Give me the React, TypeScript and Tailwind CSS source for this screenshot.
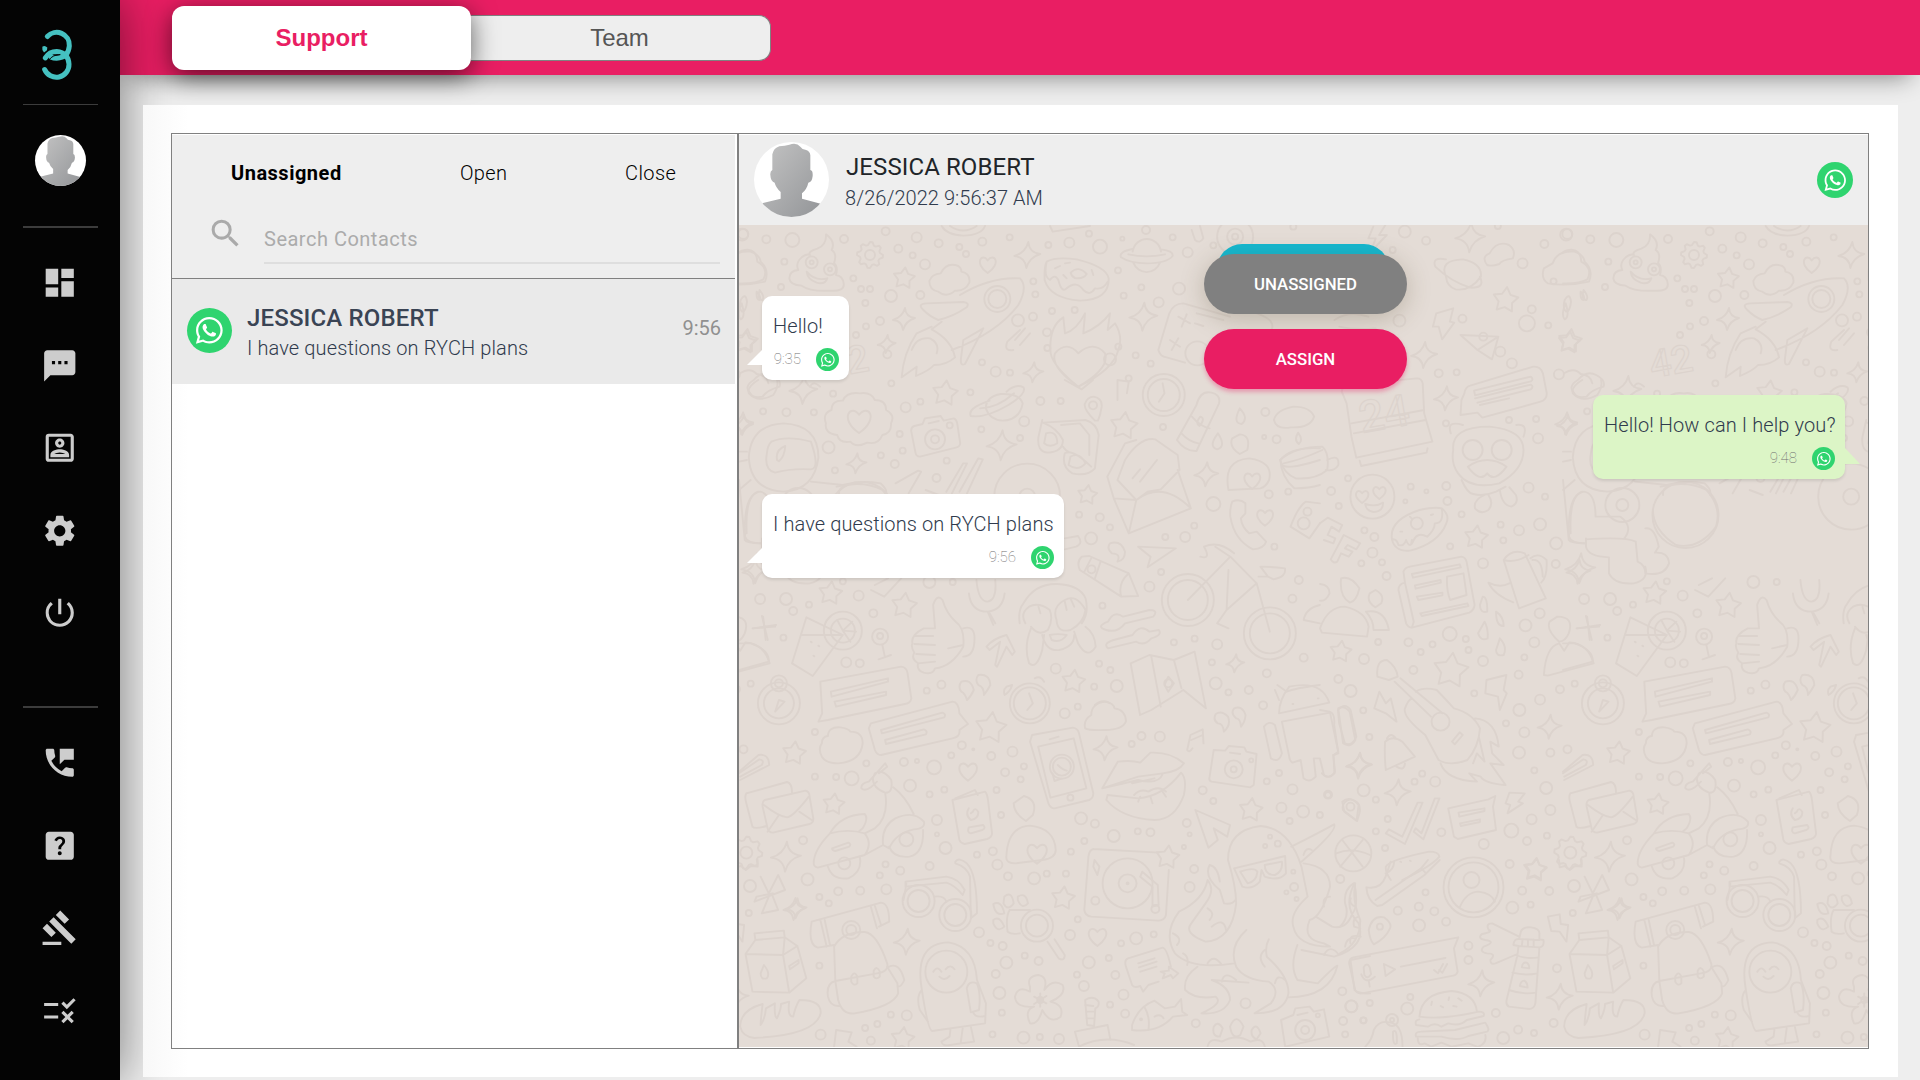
import React from "react";
import {
  MdDashboard,
  MdSms,
  MdOutlinePortrait,
  MdSettings,
  MdPowerSettingsNew,
  MdPermPhoneMsg,
  MdHelpCenter,
  MdGavel,
  MdRule,
  MdSearch,
} from "react-icons/md";
import { FaWhatsapp } from "react-icons/fa";

/* ---------- Wallpaper ---------- */

type Sheet = {
  x: number;
  y: number;
  sx: number;
  rings: number[][];
  stars?: number[][];
  sparks?: number[][];
  hearts?: number[][];
  gears?: number[][];
  art: string;
};

const SY = 1 / 3;

const sheets: Sheet[] = [
  {
    x: 730, y: 120, sx: 1 / 3,
    rings: [
      [40,342,5],[109,358,4],[187,360,7],[342,357,4],[163,425,3],[467,334,4],[560,352,5],[505,386,4],[548,406,3],[585,433,5],[626,370,4],[688,381,3],[708,402,3],[757,365,4],[839,352,3],[955,375,3],[1018,368,5],[1110,380,7],[1077,341,3],[1177,356,2],[1248,330,4],[1328,352,3],[1450,376,3],[1373,397,5],
      [370,475,3],[393,507,3],[420,507,3],[406,549,3],[483,528,6],[571,525,4],[153,501,3],[910,484,3],[916,523,3],[1181,527,3],[1164,451,3],[1234,502,3],[1286,547,5],[1347,506,6],[1034,570,3],[966,573,3],[909,590,4],[864,601,6],[951,637,4],[952,684,3],[450,603,4],[378,645,3],[408,619,3],[1165,680,3],[1140,718,6],[1217,706,3],[1262,731,3],[1196,775,3],[797,755,5],[756,727,3],[840,758,3],[472,703,4],[484,790,3],
      [420,405,5],[802,537,13],[802,537,9],[245,427,6],[300,448,6],[245,427,2],[300,448,2],[1402,700,12],
    ],
    stars: [[522,475,11],[45,668,11]],
    sparks: [[892,405,13],[522,597,11],[470,672,9],[910,757,10],[1240,590,14]],
    hearts: [[773,432,9]],
    gears: [[420,405,13]],
    art:
      "M27 490Q75 492 100 478Q118 445 82 425Q80 385 45 390Q30 392 27 398 M240 405Q232 395 262 386Q290 375 288 343Q318 365 305 390Q322 400 312 430Q325 440 318 465Q338 468 341 490Q345 515 300 512Q240 515 215 497Q180 495 178 475Q178 452 205 450Q195 430 215 412Q230 400 240 405Z M230 455Q255 485 292 475Q285 495 260 488Q232 478 230 455Z " +
      "M80 515Q95 530 88 540Q78 538 80 515Z M35 550Q20 585 32 598Q48 590 35 550Z M625 515Q598 510 598 483Q605 462 632 460Q650 425 685 438Q695 445 694 455Q722 460 718 488Q705 515 675 512Q650 535 625 515Z " +
      "M950 425Q975 410 1040 418Q1130 440 1136 475Q1138 540 1050 542Q960 535 944 480Q942 440 950 425Z M950 425Q940 470 960 480Q975 460 985 480Q995 520 1010 505Q1040 480 1060 510Q1080 530 1095 505Q1120 510 1133 485 M1022 458Q1045 435 1070 462Q1060 478 1035 474Q1025 470 1022 458Z M975 445L990 438M1005 430L1020 428M1085 450L1090 465M1000 465L1010 475 " +
      "M1208 395A43 45 0 0 1 1293 395M1210 428A43 45 0 0 0 1290 428M1208 387Q1165 395 1173 412Q1200 430 1250 430Q1310 430 1328 408Q1330 392 1293 388M1195 403Q1250 415 1305 403 " +
      "M690 525Q780 470 870 475Q895 500 865 555Q800 640 665 690M580 570Q560 552 590 550L700 546Q720 548 710 562Q670 590 625 600Q600 590 580 570M665 545M635 605L605 628Q665 660 675 712M760 625L705 732Q690 740 693 715L700 660ZM605 620L560 640Q520 700 515 772L560 740L558 768Q600 750 612 735Q650 735 675 712M545 690Q560 650 600 655Q630 670 620 700 " +
      "M962 700Q955 620 1000 592L1005 640Q1040 630 1065 580L1060 640Q1110 620 1140 580L1133 630L1155 610Q1180 650 1165 690Q1150 750 1045 800Q970 740 962 700M1045 800Q960 740 975 700Q1010 660 1045 700Q1090 660 1125 700Q1140 745 1045 800Z " +
      "M635 318Q650 345 700 347Q755 345 765 318M660 318Q700 345 740 318M960 318L968 335L1080 318M1385 330L1395 360Q1410 372 1420 355L1410 318M850 690Q820 695 832 665L870 630M855 660L885 625M870 675L900 640M1500 590L1360 550Q1330 550 1318 580L1285 690Q1290 710 1310 712L1365 728M1345 590L1380 610M1370 583L1355 620M1320 660L1350 680M1345 655L1325 690M1400 580L1480 600M1395 610L1420 618 " +
      "M30 760Q60 740 80 762Q110 765 115 790M270 800Q250 780 240 800",
  },
  {
    x: 1160, y: 220, sx: 0.4847,
    rings: [
      [205,101,4],[275,20,3],[505,35,6],[480,90,3],[549,62,4],[697,18,3],[748,130,5],[838,44,6],[793,72,4],[767,268,4],[812,184,3],[624,296,4],[757,310,8],[801,316,3],[667,350,4],[702,395,5],[726,430,5],[575,460,4],[612,457,3],[823,463,5],[780,655,5],[776,597,3],[494,302,6],[388,775,3],[155,50,18],[155,50,8],[155,50,3],[645,690,10],[705,690,10],[720,600,3],[590,610,3],
    ],
    stars: [[713,240,13],[846,363,12]],
    sparks: [[640,52,15],[545,405,13],[590,535,12],[838,610,11]],
    art:
      "M590 170Q575 120 625 118Q665 130 662 170Q640 215 610 208Q592 200 590 170ZM590 118Q560 110 568 140Q600 185 640 203Q672 205 660 170 M675 135Q662 110 680 100Q695 60 720 75Q735 90 728 115Q705 120 700 132Q685 140 675 135Z M800 190Q785 175 792 145L810 130Q820 90 855 95Q875 105 876 125Q895 150 885 185Q840 200 800 190Z " +
      "M440 20L430 55L445 55L435 95L468 45L452 45L465 15M420 90L440 110L420 140M570 280L605 265L598 305L607 308L582 358L575 320L563 320ZM620 345L698 350L685 418L655 390ZM655 390L698 350M835 240Q845 215 848 245Q846 275 838 275Q830 265 835 240ZM874 210Q885 230 880 240Q868 240 874 210Z " +
      "M622 540L628 520Q630 500 640 497L770 440Q785 438 790 460L798 520Q798 540 785 545L665 593L655 578L620 585ZM648 512L765 470Q772 478 765 484L650 526ZM650 535L765 494Q772 500 765 508L655 548M660 555L720 535 " +
      "M385 550L375 515Q375 500 390 495L530 475Q540 475 542 490L545 580L562 665L405 713L395 650ZM395 610L545 570M400 640L548 600M412 722L415 738L550 698L552 685M605 690Q600 620 680 620Q750 630 750 690Q750 750 700 790Q640 810 615 760Q600 730 605 690ZM635 740Q675 700 715 740Q690 790 675 760Q660 790 635 740M600 640Q590 600 625 615M735 615Q760 610 750 650 " +
      "M248 720Q280 680 335 680Q350 700 345 750Q320 780 280 775Q255 760 248 720ZM255 730Q290 720 335 690M345 720Q370 700 368 735Q360 755 342 750M235 600Q240 570 275 560Q310 560 318 590Q310 625 270 622Q240 630 235 600ZM855 520Q840 500 862 480Q880 450 900 465Q920 480 915 500Q890 510 880 530Q860 535 855 520Z M200 280Q240 300 230 330M360 300Q390 270 430 290M370 320Q400 330 445 325",
  },
  {
    x: 730, y: 380, sx: 0.3762,
    rings: [
      [467,82,5],[506,65,3],[274,41,3],[150,97,4],[223,97,3],[88,94,3],[639,37,3],[825,63,4],[879,63,3],[782,124,5],[668,148,3],[771,174,3],[262,202,6],[451,162,3],[459,212,3],[401,226,3],[438,252,4],[279,271,3],[576,242,3],[549,294,4],[1151,141,3],[1423,96,4],[1420,171,2],[1453,178,4],[1432,343,4],[1484,335,3],[1285,372,7],[1234,437,3],[1210,471,5],[1157,471,3],[1010,442,3],[928,404,3],[983,412,4],[960,475,6],[961,568,4],[1146,576,3],[1115,620,5],[990,677,3],[1495,656,4],[1512,600,4],[1447,500,3],[1180,787,3],[1235,776,3],[1295,793,5],[1281,847,3],[1427,880,4],[1525,833,4],[1291,910,6],[1325,937,3],[1379,930,4],[866,866,5],[981,851,3],[1011,870,3],[968,920,3],[1028,918,6],[530,606,6],[592,606,3],[80,657,5],[149,657,6],[210,674,3],[342,647,5],[168,693,4],[300,604,3],[381,700,4],[142,773,3],[309,847,5],[345,850,4],[523,932,3],[562,914,4],[55,911,3],
      [1153,45,21],[1153,45,16],[545,178,10],[545,178,4],[584,136,3],[965,76,4],[790,350,33],[790,350,8],[1217,660,26],[1217,660,20],[1435,760,26],[1435,760,20],[300,752,19],[300,752,12],[399,770,8],[399,768,3],[797,970,20],[797,970,16],[130,970,21],[130,970,15],[130,910,8],[130,910,4],[1525,430,6],[1535,395,4],[1165,910,4],
    ],
    stars: [[572,40,13],[1047,138,14],[950,345,10],[267,640,12],[463,677,13],[913,905,12]],
    sparks: [[195,30,14],[35,135,10],[336,250,10],[722,196,15],[1266,283,12],[65,575,12],[1343,850,9]],
    hearts: [[343,120,13],[1388,300,9],[1422,410,9]],
    art:
      "M142 130Q235 135 235 232Q225 330 142 335Q55 330 50 232Q55 135 142 130ZM110 185Q150 165 215 185Q240 265 215 268Q160 265 120 278Q90 270 98 220Q100 195 110 185ZM125 240Q120 210 147 198Q145 230 130 244ZM24 215L45 215M24 245L45 240M215 305L300 315Q350 300 400 310Q420 330 415 345M290 345Q285 310 350 310M55 300L24 330M75 335Q35 350 40 470Q45 490 85 490 " +
      "M255 130Q245 100 270 90Q270 60 300 62Q310 35 345 40Q375 35 385 60Q415 60 415 90Q440 105 428 130Q430 160 405 165Q395 195 365 188Q335 205 320 185Q290 190 285 165Q250 160 255 130Z " +
      "M490 138L512 132L518 115L560 108L568 122L595 115Q602 118 604 130L612 190Q612 200 600 203L505 230Q495 230 493 218L482 155Q480 142 490 138ZM528 130L555 123 M680 85Q680 50 720 42Q770 40 778 70Q770 120 725 122Q690 120 680 85ZM690 62Q630 85 640 108Q680 115 740 75Q790 40 780 22Q760 10 735 35M665 85Q710 85 755 40 " +
      "M970 122Q940 88 943 72Q950 50 967 50Q990 55 988 80Q985 105 978 122ZM1030 60L1030 0L1060 5L1055 40M1150 10L1155 40L1140 65M75 0Q45 20 50 40Q75 70 115 45Q130 20 125 0M890 0L935 28L965 0 " +
      "M830 120L820 170Q815 215 845 218Q885 215 885 180Q870 145 832 128L945 120Q975 130 980 165L970 265Q950 290 910 280Q880 260 890 220Q910 205 960 260M885 200Q895 215 900 215M840 160Q870 150 870 190Q850 205 835 190ZM905 230Q930 215 945 250Q925 275 900 255ZM880 135L930 130L955 165L955 225 " +
      "M1280 38Q1305 45 1300 70L1240 213Q1210 215 1188 180L1240 75Q1250 30 1280 38ZM1228 110Q1250 140 1275 145M1200 160Q1220 185 1245 190M1250 110Q1265 115 1248 138Q1235 130 1250 110M1355 85Q1380 115 1360 132Q1335 130 1355 85ZM1297 160Q1320 200 1295 208Q1270 200 1297 160ZM1355 163Q1385 165 1375 210L1355 222Q1325 200 1335 175ZM1510 158Q1525 180 1512 192Q1498 180 1510 158 " +
      "M1325 330Q1310 240 1380 235Q1445 245 1433 300Q1425 320 1410 325ZM1568 205Q1490 200 1463 240Q1465 290 1500 325Q1540 325 1568 315M1465 250Q1470 275 1568 240M1030 300L1050 240Q1090 170 1130 178L1190 225L1195 270L1145 328L1110 335L1080 360ZM1003 290L1050 190L1080 180M1003 290L1020 355L1080 360L1060 460L1020 355M1080 360Q1150 300 1225 385L1060 460M1225 385L1190 270M1070 295L1090 268M1090 305L1135 240 " +
      "M1335 365Q1355 355 1370 370L1370 400L1358 415Q1360 440 1380 460L1400 455L1425 485Q1420 505 1390 508Q1340 480 1330 410Q1328 385 1335 365ZM1568 370L1530 365Q1510 380 1490 440L1540 475L1568 430M935 530Q920 545 930 570L1040 650L1085 648L1060 580L955 528ZM960 535L942 575M985 545L970 595M1060 580Q1030 610 1040 650M1085 500L1185 505L1110 562L1118 530Z " +
      "M440 310L500 272L508 275L475 340M520 330L555 345M575 335L620 250L630 250L590 340M610 335L660 235L672 238L630 340M890 475L925 468Q940 490 920 500L890 508M1010 490Q1040 480 1050 515Q1050 540 1030 545Q1040 520 1015 520Q1000 505 1010 490Z " +
      "M1217 660L1330 530L1290 500M1330 530L1400 610L1320 690L1325 570M1400 610L1435 755M1405 590L1430 590L1410 560Q1440 560 1475 565Q1480 590 1445 598L1430 590M1250 530Q1280 540 1260 500Q1300 480 1340 520M1320 690L1295 730L1325 745 " +
      "M1568 675Q1530 685 1525 720L1568 730M203 712L165 850L220 888L300 765ZM190 765L300 765M300 752L285 720M300 752L325 725M300 752L335 755M300 752L320 785M215 785L217 787M235 797L237 799M222 827L224 829M405 795L412 832M395 838L428 825M60 745L120 740M88 710L95 780 " +
      "M540 675Q550 640 565 660Q575 700 600 725Q625 745 620 800Q590 860 545 865Q540 885 515 878Q495 870 500 850Q480 835 490 818Q480 800 485 790Q480 765 515 745L545 745ZM490 768L540 768M490 792L545 795M495 822L545 825M500 850L545 845M580 805L620 795M620 745Q650 735 650 775Q650 830 620 830M655 600Q660 665 685 665Q710 660 705 600M635 640Q640 695 685 695Q725 690 730 640M685 695L700 735M690 700L705 730 " +
      "M375 630L410 650L455 595M385 615L420 595M710 860L735 800L750 825L757 815L735 765Q700 775 682 800L690 810L718 785L705 855Z " +
      "M770 730Q765 690 780 670Q810 610 870 612Q930 615 945 655Q955 700 935 730M785 730Q770 700 795 680Q820 665 850 690Q860 720 845 750Q820 770 800 740M868 720Q855 680 890 660Q920 640 945 690Q940 730 905 750Q870 760 868 720M800 745Q780 800 795 850Q815 870 830 810L835 765M830 765Q840 815 875 810Q915 800 915 765M850 765Q870 760 895 765Q880 790 855 780ZM945 740Q970 760 972 800Q950 840 925 790L915 755M820 680L825 700M890 665L895 690M905 655L915 680M1000 750Q970 740 1005 725Q1020 690 1045 710L1115 690Q1140 690 1125 710L1050 730Q1030 760 1000 750ZM1005 805Q990 790 1020 780L1070 765Q1090 730 1115 755L1140 750Q1150 765 1120 775Q1100 800 1080 785Z " +
      "M1065 850L1115 825L1180 840L1235 815L1265 985L1205 930L1120 990L1090 1005ZM1120 830L1145 980M1180 840L1200 925M1165 890L1155 915L1165 935L1180 910Z M240 905L455 860Q470 862 472 880L482 955Q480 970 465 972L260 1020L235 1025L245 1000ZM268 935L420 895L420 905L270 950ZM278 965L415 935L415 945L282 980ZM615 905Q640 895 648 930Q640 950 630 960Q625 940 615 935Q605 920 615 905ZM660 885Q690 880 692 915Q685 930 675 945Q675 920 660 915Q650 900 660 885ZM795 940L805 970L790 990M130 960L145 965L120 995ZM810 895Q825 885 835 905M735 920Q725 930 730 945Q745 935 750 915ZM24 790L55 790Q105 810 103 845L24 870M970 975Q990 955 1010 970M1455 915L1480 935Q1500 925 1568 915",
  },
  {
    x: 1320, y: 480, sx: 0.3827,
    rings: [
      [29,33,4],[49,78,3],[237,20,3],[278,34,2],[330,18,4],[333,63,4],[223,64,2],[370,103,3],[340,199,3],[116,151,3],[142,171,4],[137,218,5],[108,250,3],[162,247,3],[174,288,4],[472,134,3],[520,151,5],[575,133,6],[479,181,3],[545,23,5],[588,50,3],[617,190,6],[426,250,5],[616,252,4],[339,462,7],[381,477,3],[388,510,3],[231,487,4],[294,493,3],[263,516,3],[152,486,3],[115,537,5],[244,570,4],[48,597,4],[80,633,6],[426,543,5],[403,640,3],[519,584,4],[574,400,5],[537,436,6],[560,487,5],[534,532,3],[575,659,5],[627,628,4],[521,690,6],[486,730,3],[534,757,5],[520,818,6],[602,818,4],[560,871,3],[591,924,6],[267,881,3],[247,905,3],[301,905,5],[114,931,6],[146,959,3],[21,944,4],[129,771,3],[113,691,3],[177,1017,3],[146,1054,3],[317,1057,4],[170,1104,3],[428,1092,5],[500,1052,7],[553,1018,5],[541,1083,4],[593,1067,3],[602,990,5],
      [137,50,22],[315,725,9],[253,130,6],[790,75,17],[790,75,6],[955,105,33],
    ],
    stars: [[408,172,12],[54,515,11],[342,572,18],[563,1168,11]],
    sparks: [[680,265,15],[102,857,13],[203,937,13],[600,740,12]],
    hearts: [[110,48,7],[155,36,7]],
    art:
      "M118 72Q145 82 165 68Q165 95 140 96Q120 92 118 72ZM188 178Q180 120 260 90Q300 80 318 85Q340 105 330 130Q310 190 235 212Q195 215 188 178ZM188 178Q200 175 205 195Q220 200 225 180Q235 210 245 180Q255 155 280 170Q300 150 300 130Q325 130 318 85M210 155L215 155M235 110L240 116M290 105L295 103M238 193L240 180 " +
      "M0 130L20 113L58 135L50 155L30 140L20 165L40 175L35 190L10 180M62 165L105 190L95 208L72 195L65 205L85 215L75 230L55 220L45 245Q35 252 28 238Z M55 295Q80 285 103 325Q95 365 78 368Q50 350 55 295ZM0 445Q20 380 65 380Q120 395 127 440L123 470L5 458ZM145 330Q170 345 160 370L145 382Q120 365 130 340ZM120 395Q170 385 180 450L140 450Q140 420 120 395M0 312Q25 315 25 340Q15 365 0 362 " +
      "M235 260L370 230Q380 232 383 245L404 375Q402 392 390 398L240 443Q230 442 225 430L205 330Q205 312 222 308M222 308L218 275Q222 262 235 260M222 308L245 425L240 443M240 282L365 253L368 262L243 293ZM248 316L315 300L316 308L250 326ZM253 350L320 338L320 346L257 360ZM262 400L385 370L388 378L266 408ZM332 290L375 280L383 345L340 360Q330 330 332 290Z " +
      "M370 0Q385 40 400 42Q430 50 460 35L485 20M430 45Q400 60 405 85Q420 105 440 90Q455 70 440 45M470 30Q475 75 500 80Q520 70 512 45L495 22M480 240Q500 205 535 220L590 355L520 385ZM480 240Q510 250 545 225M495 310Q470 325 440 308Q455 345 505 367M550 235Q570 215 592 240Q595 290 578 308M555 240Q580 235 582 290M425 350Q438 350 437 395Q418 400 418 375ZM460 395Q480 410 480 438Q460 440 460 395ZM430 425Q440 445 438 475Q420 485 413 460ZM470 475Q490 500 480 525Q460 530 460 510ZM620 410Q665 410 650 460Q640 485 625 485Q590 450 600 425ZM585 585Q590 500 625 490L638 512L652 487Q700 490 715 550L595 587ZM695 408L710 480M672 445L732 435 " +
      "M635 0L650 180Q655 190 695 190M695 175L695 200Q700 230 755 232L755 280Q770 315 820 310Q860 300 850 260M695 178Q800 170 825 185L830 245Q850 255 850 280M850 280Q900 290 912 250Q910 215 875 218L885 200Q875 140 850 145M655 160Q650 40 690 35Q720 40 720 110L785 110Q820 140 795 175M890 20Q960 0 1010 30Q1050 80 1035 140Q990 210 930 195Q870 150 870 90 " +
      "M150 590Q145 540 175 540Q200 560 203 590L180 600ZM195 605L290 710M210 595L320 700M250 635Q270 620 305 630Q330 660 350 685Q400 700 418 745Q415 800 385 840Q340 860 310 840L275 765Q215 710 222 685Q230 660 240 655M345 785L365 757L373 765L352 793ZM405 715Q460 720 467 800L445 785L450 820L480 855L445 850L485 915Q430 910 420 890L390 880L410 905Q330 900 315 850M415 770L430 845L410 820L400 850 M435 600L487 585L480 630L488 640L470 690L465 650L432 640ZM155 635L172 670L185 655L200 725L172 700L142 685ZM172 870Q168 830 170 785Q190 765 215 785L248 830ZM175 775Q185 755 198 775M200 860Q220 875 222 850 " +
      "M80 958Q110 965 103 1000L97 1023L60 990Q55 965 80 958ZM172 1060L222 1092L268 968L255 968L215 1070L180 1048ZM245 1055L270 1078L312 955L300 955L265 1060L250 1045ZM335 985L440 958L458 948L452 980L460 1050L360 1077L350 1070ZM362 998L430 985L430 993L364 1010ZM366 1030L418 1018L418 1026L368 1038ZM495 938L535 940L518 965L530 970L490 1000L497 975L485 970Z M172 1160Q180 1140 285 1115Q310 1115 312 1130Q290 1160 215 1200M185 1200Q170 1175 172 1160M210 1145L212 1146M235 1142L237 1143 M0 690L25 695Q40 700 37 735L48 820L35 825L38 880Q20 900 5 880M47 690Q65 665 80 690L95 770Q85 800 65 790L50 730Z",
  },
  {
    x: 730, y: 700, sx: 0.4082,
    rings: [
      [208,96,3],[33,148,4],[334,190,3],[426,186,4],[458,183,2],[568,136,4],[596,148,1],[542,166,3],[500,202,7],[640,168,4],[692,155,5],[720,199,3],[674,217,4],[712,238,3],[653,270,3],[208,230,3],[260,231,3],[298,235,7],[441,257,6],[525,269,3],[489,283,3],[852,20,3],[820,40,5],[984,132,3],[1008,108,4],[1053,110,5],[1306,16,4],[1345,219,3],[1315,244,3],[1378,268,5],[1465,285,3],[1158,271,4],[1184,303,3],[507,360,5],[507,403,2],[528,444,6],[664,345,3],[489,498,4],[605,464,3],[644,454,4],[655,494,5],[681,529,4],[745,535,6],[776,521,3],[823,521,3],[868,423,3],[835,455,3],[860,355,6],[894,371,4],[940,408,6],[999,394,3],[1030,397,4],[1119,369,4],[1126,403,2],[1112,441,2],[1137,507,4],[1126,561,5],[1351,323,5],[1404,335,6],[1445,345,3],[1371,363,3],[179,421,4],[190,538,6],[49,558,6],[265,574,4],[319,572,4],[383,568,5],[367,526,3],[381,493,3],[417,512,4],[219,591,3],[242,610,3],[46,639,3],[610,697,5],[638,729,3],[668,738,4],[722,767,3],[756,783,4],[677,788,6],[651,822,4],[660,879,6],[666,938,3],[643,1003,3],[719,1013,6],[759,1011,3],[806,1017,5],[852,658,3],[833,705,5],[995,715,6],[1038,703,3],[958,730,3],[928,774,3],[879,787,6],[850,824,3],[867,858,5],[944,825,4],[964,884,5],[931,914,3],[968,941,4],[1141,970,4],[1263,910,5],[1500,874,4],[1522,919,6],[1552,961,3],[1502,963,4],[1507,1003,3],[219,797,3],[394,944,3],[433,946,5],[361,972,3],[331,984,3],[345,1022,4],[222,1004,5],
      [1495,537,4],[1520,320,4],[1527,460,18],[40,458,6],[813,200,12],[813,200,9],[834,293,3],[1234,208,9],[1234,208,3],[1277,181,2],[432,418,7],[280,490,6],[462,603,16],[462,603,11],[552,645,16],[552,645,11],[752,677,16],[752,677,11],[974,550,25],[974,550,9],[974,550,1],[895,602,4],[1042,627,4],[530,815,21],[297,690,9],[297,690,5],[760,900,3],[1409,990,10],[1409,990,4],[1440,946,2],[1007,958,1],[1323,410,2],[1342,431,3],[1311,438,2],[1380,515,2],[1382,561,4],[1363,577,2],[1388,597,2],
    ],
    stars: [[157,160,12],[639,84,16],[254,313,11],[1276,330,12],[1072,472,12],[816,595,12],[423,1017,12]],
    sparks: [[137,470,15],[158,627,11],[433,725,13],[920,145,12],[1541,195,12]],
    hearts: [[583,212,10],[752,458,11],[900,708,10]],
    gears: [[40,458,16]],
    art:
      "M225 170Q215 145 225 130Q225 110 240 108Q240 80 270 82Q290 85 295 95Q325 95 325 130Q320 185 265 190Q235 190 225 170ZM345 70L545 5Q560 5 562 40L583 72L562 90Q565 110 545 115L370 165Q360 165 355 150L340 85ZM370 90L520 38Q530 42 525 52L372 100ZM380 120L475 88Q485 93 480 103L382 132ZM22 215L70 165Q95 160 96 195L25 240M22 220L72 178Q85 180 78 195L25 230 " +
      "M40 280L140 246Q152 250 152 278M40 280Q35 290 40 310L55 380Q60 388 90 378M85 300L185 272Q195 275 195 290L204 355Q205 368 195 372L105 398Q95 398 92 385L80 320Q78 305 85 300ZM83 315Q120 350 140 352Q155 350 193 290M140 350M92 395L120 345M170 335L203 362 " +
      "M322 265Q320 250 340 245L380 190L385 200L365 220M322 265Q330 275 345 262L360 245M355 220Q375 205 395 240Q400 280 380 278Q350 265 350 235ZM380 278Q390 350 355 385L330 400M400 262Q430 290 450 342M205 490Q205 450 245 400Q290 385 330 400Q350 430 330 465L215 503Q205 500 205 490ZM245 400Q270 345 330 342Q340 355 325 385L315 395M375 435Q370 380 405 355Q450 330 475 365Q480 385 450 388Q405 400 390 445ZM330 465L375 435M240 500Q250 540 290 535Q325 515 318 470M390 440Q400 475 440 470Q475 460 473 390M250 445L290 428Q298 432 292 440L258 453Q250 452 250 445Z " +
      "M870 85Q865 60 885 45Q885 10 920 5Q940 10 942 25Q970 30 970 65Q960 90 920 90Q880 92 870 85ZM740 105L840 83Q852 85 855 100L890 280Q890 295 880 300L795 325Q785 325 780 310L735 125ZM755 140L842 115L873 265L785 293ZM795 243L790 220M795 243L812 236M803 195Q815 210 825 212M783 118L805 110M545 300L625 275Q630 280 632 300L642 400Q642 412 630 417L575 432Q565 430 562 420ZM552 295L600 270L607 285M585 325Q575 345 590 360Q610 355 608 335Q600 320 595 335L590 340M585 382L620 375Q628 385 618 390L590 400Q580 398 585 382ZM720 288Q755 300 742 345L725 363Q695 340 695 310ZM677 470Q680 380 735 377Q795 385 798 450Q798 475 765 480L700 490Q675 490 677 470Z " +
      "M912 265L950 185Q985 180 1005 188L1030 158Q1080 155 1112 190Q1100 215 1060 220L1000 230ZM912 265L1000 240Q1050 255 1060 222M925 285L1000 295Q1060 290 1105 218Q1120 235 1112 285Q1090 360 1040 360Q960 355 922 300ZM990 285Q1005 265 1025 275Q1050 255 1068 275M1005 290L1000 305M1030 290L1035 310M1060 275L1068 290M985 250L1040 235 " +
      "M1120 150L1128 105L1158 88L1160 130M1130 120L1158 105M1120 150Q1125 160 1133 145M1190 42Q1205 30 1220 50Q1228 75 1210 95Q1208 70 1195 70Q1182 60 1190 42ZM1235 25Q1255 15 1263 45Q1262 65 1252 80Q1250 55 1240 55Q1225 40 1235 25ZM1185 150L1213 152L1222 138L1260 142L1265 155L1290 162L1283 255L1275 262L1180 245Q1172 242 1175 230ZM1225 158L1250 162 " +
      "M1352 65L1470 38L1490 155Q1480 165 1478 165L1482 215Q1470 240 1455 225L1445 175L1430 175L1435 230Q1420 250 1405 235L1398 180L1378 188Q1370 180 1370 170ZM1308 80Q1320 60 1335 75L1352 160Q1345 190 1325 175ZM1490 25Q1505 15 1518 35L1532 120Q1520 145 1502 130ZM1345 40Q1345 0 1370 -40Q1450 -60 1468 8ZM1345 0L1335 -30M1378 12L1380 12M1440 -5L1442 -5 " +
      "M1140 330L1225 375L1218 410L1185 385L1195 420L1172 443ZM1500 305Q1520 285 1540 315L1535 362L1505 335ZM1500 420L1550 500M1550 420L1495 500M1485 460Q1525 440 1568 465 " +
      "M890 447L1050 458M890 447Q880 450 878 470L868 630Q870 648 885 650L1050 662Q1065 660 1068 645L1075 510M1010 515L1048 555L1050 615L1035 620L1035 560L1005 530ZM893 480L905 500L900 525L890 500Z " +
      "M1240 610Q1240 560 1220 480Q1220 390 1300 378Q1370 385 1400 500L1415 590Q1370 640 1380 680Q1390 740 1470 740L1455 730Q1400 720 1420 660Q1450 650 1470 560Q1470 500 1405 490M1240 610Q1230 720 1165 725Q1110 700 1130 670L1165 610Q1190 570 1170 540Q1160 600 1100 635Q1060 700 1090 760Q1130 810 1235 790M1175 495Q1160 530 1200 570L1210 610Q1230 615 1238 600M1200 545Q1195 500 1175 495M1235 505L1360 468L1362 520Q1345 545 1310 530L1302 510L1298 545Q1280 570 1255 560ZM1250 515Q1285 500 1292 515Q1290 545 1268 550ZM1310 495L1352 485Q1355 515 1335 525Q1310 525 1310 495M1375 440Q1440 400 1480 373Q1490 390 1400 485M1265 690Q1220 740 1240 800Q1260 840 1320 845Q1350 870 1325 910L1285 940Q1360 940 1368 880Q1370 830 1315 770Q1310 740 1320 718M1235 790M1145 800Q1110 830 1115 870Q1140 900 1190 890Q1210 910 1155 940Q1210 945 1225 900Q1225 860 1180 840L1270 848M1390 735Q1370 800 1390 840L1440 850Q1480 800 1488 797Q1470 890 1368 892M1530 550Q1500 620 1540 670Q1560 740 1480 770L1400 750M1530 550Q1540 620 1525 640Q1510 690 1475 680L1435 650M1170 790Q1185 760 1205 795M1110 760Q1125 770 1120 795M1085 700Q1110 715 1095 735M1170 625Q1190 640 1175 660M1180 680Q1210 650 1215 690M1405 465Q1410 440 1425 450M1455 620Q1450 590 1470 590M1455 765Q1470 730 1492 765M1520 730Q1515 700 1545 710M1310 800Q1290 770 1310 750M1205 845Q1210 810 1240 840M1335 850Q1340 820 1360 840 " +
      "M75 530L95 580L118 525L135 570L60 605L65 590L105 580M95 590L78 640L118 630L105 590M430 545L530 530Q560 535 575 570L570 585Q550 555 530 548L430 560ZM425 600Q430 570 432 550M500 590Q525 585 530 605M552 485Q560 470 580 490Q605 520 605 640L590 655L588 530Q580 500 552 490ZM645 612Q665 600 672 640Q650 650 645 612ZM672 590Q690 570 695 610Q680 635 670 610ZM705 590Q725 575 730 610Q715 630 705 600ZM645 660Q660 645 672 680Q655 700 645 670ZM685 630L735 630M685 630Q675 650 680 695Q690 705 710 700M778 725L805 775Q820 785 820 765L795 718 " +
      "M200 665L370 608Q390 610 390 665L365 680M200 665Q190 735 215 743L255 735M222 663L237 740M232 660L245 735M345 620L360 685M355 618L370 675M255 740Q275 695 330 696Q360 700 385 790Q390 815 360 820L258 843L255 740ZM258 843L265 900Q275 945 305 940Q400 920 412 880L410 850L385 800M390 800Q415 785 427 840Q420 860 412 860M258 843Q235 850 240 890Q245 920 268 918M297 830Q305 810 312 830L312 850Q303 860 297 845ZM352 812Q360 795 367 815L367 830Q358 840 352 830Z " +
      "M60 700L132 692L134 712L62 720ZM62 720L38 762L55 875L145 878L187 835L165 738L134 712L130 765L38 762M130 765L165 738M130 765L145 878M83 795Q100 820 90 835Q75 840 75 820ZM145 798L168 780L168 790L147 808Z M25 980Q25 930 80 912Q75 960 75 975Q85 960 88 925L110 910Q108 950 115 955Q125 930 125 912L145 905Q140 950 155 950Q160 920 170 900Q225 900 222 940Q210 1005 60 1014Q30 1010 25 980Z " +
      "M470 870Q450 730 535 727Q600 740 605 840L627 910L625 970L495 993Q485 990 470 870ZM580 865Q585 840 605 850Q615 880 610 930L590 937ZM470 870Q455 890 465 930L485 965M540 990L538 1010L518 1025Q520 1040 540 1035L565 1030L570 985M590 980L598 1025L555 1032M595 935Q600 955 625 948M498 815Q508 795 518 815M528 808Q540 790 550 808M513 830Q525 845 538 828 " +
      "M735 860Q725 830 755 825Q780 830 770 870Q790 835 815 855Q825 885 785 905Q820 915 810 950Q785 975 765 930Q755 975 735 970Q720 930 745 920Q700 925 698 890Q705 855 735 875Z M760 880L760 920M745 890L775 910M775 888L745 912 " +
      "M975 775L1060 743Q1070 745 1080 800M975 775Q965 780 970 800L985 855Q990 865 1005 858L1012 875L1025 855L1050 845M1000 790L1040 775M1002 802L1045 785M1005 815L1045 800M1075 800L1098 820L1085 835L1080 825L1060 835L1065 820L1055 815L1075 812ZM985 975Q1000 920 1040 902L1065 925L1090 920L1105 897L1108 935L1120 945L1085 950Q1050 1000 985 990ZM1015 920Q1030 950 1025 990M1040 950Q1055 940 1062 955M870 900Q890 885 903 905Q905 920 895 925L892 978L875 975ZM870 915L890 918M872 935L892 935M873 955L892 955M845 995L925 975L932 1020M845 995L855 1040M855 1040Q920 1000 990 1035 " +
      "M1185 980Q1195 960 1207 985L1200 1010Q1180 1010 1185 980ZM1225 980Q1240 935 1258 980L1250 1005Q1230 1020 1225 980ZM1278 990Q1290 965 1300 1000L1290 1018Q1275 1010 1278 990ZM1170 1040Q1175 1010 1205 1025Q1240 1000 1275 1025Q1305 1010 1310 1040M1350 960L1380 945L1385 925L1420 920L1430 935L1455 928L1468 1010L1360 1040ZM1390 945L1415 938M260 990L298 997L290 1025L310 1040M260 990L255 1040M1520 780L1568 768M1520 780L1530 870Q1540 882 1568 880",
  },
  {
    x: 1340, y: 860, sx: 0.338,
    rings: [
      [253,97,3],[233,140,4],[171,152,4],[279,154,4],[314,185,4],[234,196,6],[502,12,4],[539,92,4],[619,93,4],[510,143,6],[564,134,3],[380,257,4],[380,300,4],[642,325,4],[461,459,4],[208,411,3],[199,446,6],[88,429,3],[34,439,6],[69,481,3],[632,489,4],[527,509,4],[574,519,3],[483,534,6],[395,82,30],[395,82,25],[389,60,8],[154,480,6],[154,480,2],[118,200,3],
    ],
    stars: [[577,30,12]],
    sparks: [[418,370,13],[650,410,13],[830,145,10]],
    gears: [],
    art:
      "M355 140Q375 95 410 95Q450 100 458 125M78 82Q120 90 135 50L150 5M78 82Q80 120 110 138L125 135L250 45L295 0M105 120L240 25L260 0M240 25L255 40M135 40Q160 30 160 5M85 210Q95 165 130 172Q155 190 148 205Q135 235 100 253Q88 240 85 210Z " +
      "M40 292L350 232L337 265L348 335Q345 345 335 347L65 400Q50 402 45 390L27 310Q27 295 40 292ZM130 312L163 328L135 348ZM180 320L312 294M70 322Q80 305 88 322L92 342Q82 360 72 345ZM63 343Q75 375 103 350M85 362L88 380M278 330L290 340L305 312M293 330L303 338L317 312 " +
      "M535 215Q540 200 565 202Q590 205 590 220L590 238L602 240Q605 260 590 262L578 430Q575 445 560 447L500 440Q490 435 493 420L525 285L528 258L513 255Q515 235 530 237ZM530 237L590 240M528 258L590 262M540 238L538 258M556 238L556 260M573 238L573 260M520 285Q550 298 588 292M510 338Q550 348 583 340M500 390Q540 405 580 398M538 322Q540 305 552 308Q560 312 560 325ZM532 378Q535 362 545 362Q555 368 555 383Z M530 230L450 190Q430 190 440 210Q455 215 420 222Q405 235 430 240Q465 245 425 260Q410 275 435 280Q465 280 445 300Q445 315 460 310L525 282 " +
      "M615 170L650 163L653 192L675 195L670 245L650 215L625 213ZM235 470Q240 400 330 393Q400 400 405 455M235 470Q300 480 410 455Q430 455 425 468L375 480Q355 500 320 490L300 500Q280 485 260 500L225 495Q220 480 235 478M225 530Q220 515 240 515L340 510L430 488Q445 510 435 515L380 528Q350 545 300 530ZM230 535Q230 560 250 550L270 560L300 548L330 560L380 550L405 560M430 525Q435 550 410 560M272 425L270 435M323 412L321 420M350 415L360 422M298 438L305 442M335 438L345 440 " +
      "M75 560Q95 540 100 510Q115 480 145 487Q185 490 185 560M157 515Q170 505 168 550Q155 560 157 515M648 0L650 22L665 18L680 30L695 18L715 20L715 0M40 70Q10 90 15 130Q30 170 0 200M45 70Q35 120 60 180Q60 250 0 280M32 115Q25 130 45 140M55 170Q35 175 42 200L60 205M15 260Q20 230 45 235",
  },
];

const starPath = (cx: number, cy: number, r: number) => {
  const pts: string[] = [];
  for (let i = 0; i < 10; i++) {
    const a = -Math.PI / 2 + 0.12 + (i * Math.PI) / 5;
    const q = i % 2 ? r * 0.55 : r;
    pts.push(`${(cx + q * Math.cos(a)).toFixed(1)} ${(cy + q * Math.sin(a)).toFixed(1)}`);
  }
  return `M${pts.join("L")}Z`;
};

const sparkPath = (x: number, y: number, r: number) => {
  const k = r * 0.16;
  return `M${x + 1} ${y - r}Q${x + k} ${y - k} ${x + r} ${y - 1}Q${x + k} ${y + k} ${x - 1} ${y + r}Q${x - k} ${y + k} ${x - r} ${y + 1}Q${x - k} ${y - k} ${x + 1} ${y - r}Z`;
};

const heartPath = (x: number, y: number, r: number) =>
  `M${x} ${y + r}C${x - r * 1.6} ${y - r * 0.1} ${x - r * 0.6} ${y - r * 1.3} ${x} ${y - r * 0.4}C${x + r * 0.7} ${y - r * 1.3} ${x + r * 1.6} ${y - r * 0.1} ${x} ${y + r}Z`;

const gearPath = (x: number, y: number, r: number) => {
  const pts: string[] = [];
  for (let i = 0; i < 32; i++) {
    const a = (i * Math.PI) / 16;
    const q = i % 4 < 2 ? r : r * 0.78;
    pts.push(`${(x + q * Math.cos(a)).toFixed(1)} ${(y + q * Math.sin(a)).toFixed(1)}`);
  }
  return `M${pts.join("L")}Z`;
};

function Wallpaper() {
  return (
    <svg aria-hidden="true" className="absolute inset-0 h-full w-full" viewBox="739 225 1129 822" preserveAspectRatio="none">
      <defs>
        <g id="doodles" fill="none" stroke="#dcd3cd" strokeWidth="1.9" strokeLinejoin="round" strokeLinecap="round">
          {sheets.map((s, i) => {
            const at = (fn: (x: number, y: number, r: number) => string) => (p: number[]) =>
              fn(s.x + p[0] * s.sx, s.y + p[1] * SY, p[2]);
            const marks = [
              ...(s.stars ?? []).map(at(starPath)),
              ...(s.sparks ?? []).map(at(sparkPath)),
              ...(s.hearts ?? []).map(at(heartPath)),
              ...(s.gears ?? []).map(at(gearPath)),
            ].join("");
            return (
              <g key={i}>
                {s.rings.map((p, j) => (
                  <circle key={j} cx={s.x + p[0] * s.sx} cy={s.y + p[1] * SY} r={p[2]} />
                ))}
                <path d={marks} />
                <path d={s.art} transform={`translate(${s.x} ${s.y}) scale(${s.sx} ${SY})`} vectorEffect="non-scaling-stroke" />
              </g>
            );
          })}
          <g fontFamily="Roboto, sans-serif" fontWeight="500" strokeWidth="1.2">
            <text x="1362" y="433" fontSize="44" transform="rotate(-10 1362 433)">24</text>
            <text x="828" y="378" fontSize="38" transform="rotate(-10 828 378)">42</text>
          </g>
        </g>
      </defs>
      <use href="#doodles" />
      <use href="#doodles" x="824" />
      <use href="#doodles" x="-824" />
    </svg>
  );
}

/* ---------- Small pieces ---------- */

function Logo() {
  return (
    <svg viewBox="120 84 102 158" className="h-[53px] w-[34px]" fill="none" stroke="#45c1c1" strokeWidth="15" strokeLinecap="round">
      <path d="M142 109A38 38 0 0 1 208 137Q205 173 170 174Q160 174 154 171" />
      <path d="M136 173Q148 154 170 154Q205 157 207 192A38 38 0 0 1 134 208" />
      <path d="M148 178Q158 164 180 163" stroke="#040404" strokeWidth="3" />
      <path d="M127 140Q134 134 142 142L141 150L132 157Q125 150 127 140Z" fill="#45c1c1" stroke="none" />
    </svg>
  );
}

function Avatar({ className }: { className: string }) {
  return (
    <div className={`overflow-hidden rounded-full bg-white ${className}`}>
      <svg viewBox="72 66 225 225" className="block h-full w-full">
        <defs>
          <linearGradient id="person" x1="0" y1="0" x2="1" y2="1">
            <stop offset="0" stopColor="#c4c4c4" />
            <stop offset="1" stopColor="#929497" />
          </linearGradient>
        </defs>
        <path
          fill="url(#person)"
          d="M127 150V103Q131 84 148 79Q165 78 178 74Q200 67 211 80Q216 88 226 89Q240 92 241 106V150Q249 151 248 168Q246 187 235 188Q231 207 216 220V236L272 251V300H90V251L152 236V216Q137 202 134 188Q122 185 121 165Q120 153 127 150Z"
        />
      </svg>
    </div>
  );
}

function WhatsApp({ className }: { className: string }) {
  return (
    <span className={`flex shrink-0 items-center justify-center rounded-full bg-[#2fd46f] text-white ${className}`}>
      <FaWhatsapp className="h-[68%] w-[68%]" />
    </span>
  );
}

type BubbleProps = { text: string; time: string; mine?: boolean; className: string };

function Bubble({ text, time, mine, className }: BubbleProps) {
  return (
    <div
      className={`relative flex h-[84px] flex-col rounded-[10px] pt-[15px] pr-[10px] pl-[11px] shadow-[0_2px_3px_rgba(0,0,0,0.1)] ${
        mine ? "self-end bg-[#dcf5c6]" : "self-start bg-white"
      } ${className}`}
    >
      <p className="h-[30px] text-[20px] leading-[30px] font-light tracking-[0.1px] whitespace-nowrap text-[#303b4d]">{text}</p>
      <div className="mt-[7px] flex items-center justify-end">
        <span className="mr-[15px] text-[15px] leading-[23px] font-thin text-[#707070]">{time}</span>
        <WhatsApp className="h-[23px] w-[23px]" />
      </div>
      {mine ? (
        <svg className="absolute top-[53px] left-full h-[16px] w-[15px]" viewBox="0 0 15 16">
          <path d="M0 0L15 16H0Z" fill="#dcf5c6" />
        </svg>
      ) : (
        <svg className="absolute top-[54px] right-full h-[15px] w-[15px]" viewBox="0 0 15 15">
          <path d="M15 0V15H0Z" fill="#fff" />
        </svg>
      )}
    </div>
  );
}

const topIcons = [MdDashboard, MdSms, MdOutlinePortrait, MdSettings, MdPowerSettingsNew];
const bottomIcons = [MdPermPhoneMsg, MdHelpCenter, MdGavel, MdRule];

function Sidebar() {
  return (
    <aside className="relative z-10 flex w-[120px] shrink-0 flex-col items-center bg-[#040404] text-[#cdcdcd] shadow-[0_0_50px_rgba(0,0,0,0.5)]">
      <div className="mt-[28px] -ml-[6px] h-[53px]">
        <Logo />
      </div>
      <div className="mt-[23px] ml-[1px] h-px w-[75px] bg-[#3c3c3c]" />
      <Avatar className="mt-[30px] ml-[1px] h-[51px] w-[51px] shrink-0" />
      <div className="mt-[40px] ml-[1px] h-[2px] w-[75px] bg-[#3c3c3c]" />
      <nav className="mt-[36px] flex flex-col gap-[45px]">
        {topIcons.map((Icon, i) => (
          <Icon key={i} className="h-[37.5px] w-[37.5px]" />
        ))}
      </nav>
      <div className="mt-[74.5px] ml-[1px] h-[2px] w-[75px] bg-[#3c3c3c]" />
      <nav className="mt-[36px] flex flex-col gap-[45px]">
        {bottomIcons.map((Icon, i) => (
          <Icon key={i} className="h-[37.5px] w-[37.5px]" />
        ))}
      </nav>
    </aside>
  );
}

function Header() {
  return (
    <header className="flex h-[75px] shrink-0 items-center bg-[#e91e63] pl-[52px] font-['Liberation_Sans',sans-serif] text-[24px] shadow-[0_12px_24px_-10px_rgba(0,0,0,0.45)]">
      <button className="relative z-10 h-[64px] w-[299px] rounded-[12px] bg-white font-bold text-[#e91e63] shadow-[0_6px_26px_rgba(0,0,0,0.6)]">
        Support
      </button>
      <button className="h-[46px] w-[300px] rounded-r-[12px] border border-l-0 border-[#808080] bg-[#eeeeee] pr-[2px] text-[#555]">Team</button>
    </header>
  );
}

function ContactPanel() {
  return (
    <section className="flex w-[567px] shrink-0 flex-col border border-[#808080] pt-px pr-[2px]">
      <div className="flex h-[144px] shrink-0 flex-col border-b border-[#808080] bg-[#eeeeee]">
        <div className="mt-[24px] flex h-[28px] items-center text-[20px] text-black">
          <button className="ml-[59px] w-[113px] text-left font-bold tracking-[0.5px]">Unassigned</button>
          <button className="ml-[116px] w-[50px] text-left font-light tracking-[0.3px]">Open</button>
          <button className="ml-[115px] font-light tracking-[0.4px]">Close</button>
        </div>
        <div className="mt-[27px] flex">
          <MdSearch className="mt-[1px] ml-[35px] h-[37px] w-[37px] text-[#aaaaaa]" />
          <div className="ml-[20px] h-[50px] w-[456px] border-b-2 border-[#dedede] pt-[10px]">
            <input
              className="w-full bg-transparent text-[20px] leading-[30px] tracking-[0.5px] outline-none placeholder:text-[#ababab]"
              placeholder="Search Contacts"
            />
          </div>
        </div>
      </div>
      <div className="flex h-[105px] shrink-0 items-center bg-[#eaeaea] pr-[14px] pl-[15px]">
        <WhatsApp className="mt-[-3px] h-[45px] w-[45px]" />
        <div className="mt-[2px] ml-[15px] flex-1">
          <p className="text-[24px] leading-[30px] font-medium tracking-[0.15px] text-[#3a4454]">JESSICA ROBERT</p>
          <p className="text-[20px] leading-[30px] font-light tracking-[0.12px] text-[#303b4d]">I have questions on RYCH plans</p>
        </div>
        <span className="-mt-[8px] text-[20px] text-[#909090]">9:56</span>
      </div>
    </section>
  );
}

function ChatPanel() {
  return (
    <section className="flex flex-1 flex-col border border-[#808080] py-px">
      <div className="flex h-[90px] shrink-0 items-center bg-[#eeeeee] pr-[15px] pl-[15px]">
        <Avatar className="-mt-[2px] h-[75px] w-[75px]" />
        <div className="mt-[4px] ml-[16px] flex-1">
          <p className="pl-px text-[24px] leading-[31px] tracking-[0.1px] text-[#212529]">JESSICA ROBERT</p>
          <p className="text-[20px] leading-[30px] font-light tracking-[0.05px] text-[#303b4d]">8/26/2022 9:56:37 AM</p>
        </div>
        <WhatsApp className="h-[36px] w-[36px]" />
      </div>
      <div className="relative flex-1 bg-[#e4dcd6]">
        <Wallpaper />
        <div className="relative flex flex-col pt-[71px] pr-[23px] pl-[23px]">
          <Bubble text="Hello!" time="9:35" className="w-[87px]" />
          <Bubble text="Hello! How can I help you?" time="9:48" mine className="mt-[15px] w-[252px]" />
          <Bubble text="I have questions on RYCH plans" time="9:56" className="mt-[15px] w-[302px]" />
        </div>
        <div className="absolute top-[19px] left-[478px] h-[50px] w-[172px] rounded-[25px] bg-[#14b8d0]" />
        <div className="absolute top-[29px] left-[465px] flex w-[203px] flex-col gap-[15px]">
          <button className="h-[60px] rounded-[30px] bg-[#808080] pt-[1px] text-[16.8px] font-medium text-white shadow-[0_5px_24px_rgba(90,80,50,0.28)]">
            UNASSIGNED
          </button>
          <button className="h-[60px] rounded-[30px] bg-[#e91e63] pt-[1px] text-[16.8px] font-medium text-white shadow-[0_3px_4px_rgba(233,30,99,0.35)]">
            ASSIGN
          </button>
        </div>
      </div>
    </section>
  );
}

export default function App() {
  return (
    <div className="flex h-[1080px] w-[1920px] overflow-hidden bg-[#eeeeee] font-['Roboto',sans-serif]">
      <Sidebar />
      <div className="flex flex-1 flex-col">
        <Header />
        <main className="relative z-20 mt-[30px] mr-[22px] ml-[23px] flex h-[972px] bg-linear-to-r from-[#f8f8f8] to-white to-[45px] pt-[28px] pr-[29px] pb-[28px] pl-[28px]">
          <ContactPanel />
          <ChatPanel />
        </main>
      </div>
    </div>
  );
}
